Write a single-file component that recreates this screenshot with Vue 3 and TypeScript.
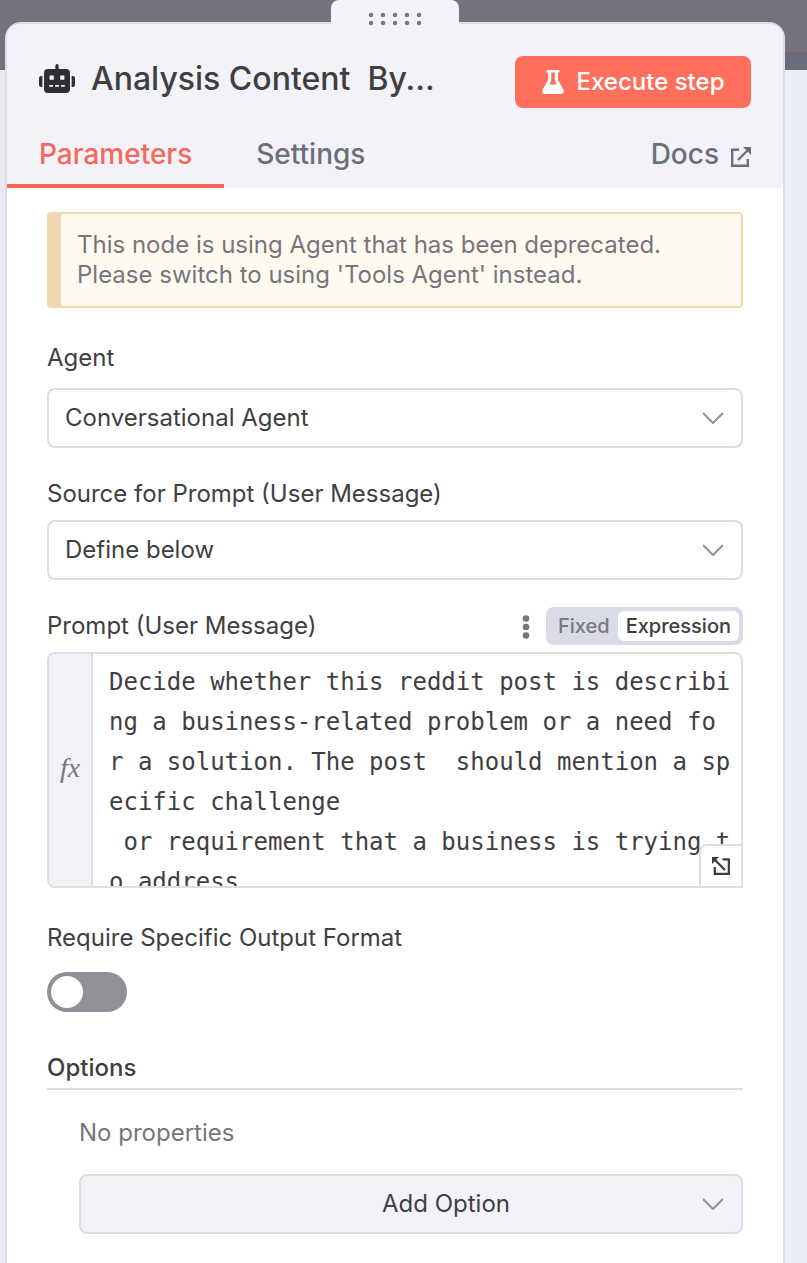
<script setup lang="ts">
import { ref } from 'vue'

type Tab = 'Parameters' | 'Settings'
const tabs: Tab[] = ['Parameters', 'Settings']
const activeTab = ref<Tab>('Parameters')

const agent = ref('Conversational Agent')
const source = ref('Define below')
const mode = ref<'Fixed' | 'Expression'>('Expression')
const modes = ['Fixed', 'Expression'] as const
const requireFormat = ref(false)
const option = ref('')
const prompt = ref(
  [
    'Decide whether this reddit post is describi',
    'ng a business-related problem or a need fo',
    'r a solution. The post  should mention a sp',
    'ecific challenge',
    ' or requirement that a business is trying t',
    'o address',
  ].join('\n'),
)
</script>

<template>
  <div class="stage">
    <main class="panel">
      <div class="handle" aria-hidden="true">
        <svg width="56" height="14" viewBox="0 0 56 14" fill="#77757f">
          <template v-for="c in 5" :key="c">
            <circle :cx="c * 12 - 8" cy="3" r="2.2" />
            <circle :cx="c * 12 - 8" cy="11" r="2.2" />
          </template>
        </svg>
      </div>

      <header class="header">
        <div class="title-row">
          <svg class="robot" width="36" height="30" viewBox="0 0 36 30" aria-hidden="true">
            <path
              fill="#2f2f31"
              fill-rule="evenodd"
              d="M18 0a1.6 1.6 0 0 1 1.6 1.6V5H27a4 4 0 0 1 4 4v16a4 4 0 0 1-4 4H9a4 4 0 0 1-4-4V9a4 4 0 0 1 4-4h7.4V1.6A1.6 1.6 0 0 1 18 0ZM10.6 11.6v4.2h4.2v-4.2Zm10.600 0v4.200h4.200v-4.200ZM10.200 21v1.700h3.800v-1.700Zm5.900 0v1.700h3.800v-1.700Zm5.900 0v1.700h3.800v-1.700ZM3.400 12v11H2a2 2 0 0 1-2-2v-7a2 2 0 0 1 2-2ZM32.600 12H34a2 2 0 0 1 2 2v7a2 2 0 0 1-2 2h-1.400Z"
            />
          </svg>
          <h1 class="title">Analysis Content&nbsp; By...</h1>
          <button class="execute" type="button">
            <svg width="22" height="24" viewBox="0 0 22 24" aria-hidden="true">
              <path
                fill="#fff"
                fill-rule="evenodd"
                d="M4.500 0h13v2.600H16v7.400l5.300 9.600C22.600 22 21.500 24 19 24H3C.5 24-.6 22 .7 19.600L6 10V2.600H4.500ZM9.200 2.600v8L7.300 14.600h7.400L12.800 10.600v-8Z"
              />
            </svg>
            <span>Execute step</span>
          </button>
        </div>
        <nav class="tabs">
          <button
            v-for="tab in tabs"
            :key="tab"
            type="button"
            class="tab"
            :class="{ active: tab === activeTab }"
            @click="activeTab = tab"
          >
            {{ tab }}
          </button>
          <a class="docs" href="#docs">
            <span>Docs</span>
            <svg width="20" height="20" viewBox="0 0 20 20" fill="none" stroke="#6b6f78" stroke-width="2.400" aria-hidden="true">
              <path d="M8 2.700H1.200V18.800H16.800V12M7 13 18 2" />
              <path d="M12 0h8v8Z" fill="#6b6f78" stroke="none" />
            </svg>
          </a>
        </nav>
      </header>

      <section class="body">
        <p class="notice">
          This node is using Agent that has been deprecated. Please switch to using 'Tools Agent' instead.
        </p>

        <div class="field agent">
          <label for="agent">Agent</label>
          <div class="select">
            <select id="agent" v-model="agent">
              <option>Conversational Agent</option>
            </select>
            <svg class="chevron" width="20" height="12" viewBox="0 0 20 12" aria-hidden="true"><path d="m0 1 10 10L20 1" /></svg>
          </div>
        </div>

        <div class="field">
          <label for="source">Source for Prompt (User Message)</label>
          <div class="select">
            <select id="source" v-model="source">
              <option>Define below</option>
            </select>
            <svg class="chevron" width="20" height="12" viewBox="0 0 20 12" aria-hidden="true"><path d="m0 1 10 10L20 1" /></svg>
          </div>
        </div>

        <div class="field prompt">
          <div class="label-row">
            <label for="prompt">Prompt (User Message)</label>
            <button class="more" type="button" aria-label="More actions">
              <svg width="8" height="26" viewBox="0 0 8 26" fill="#77757b">
                <circle cx="4" cy="5.500" r="3.300" />
                <circle cx="4" cy="14" r="3.300" />
                <circle cx="4" cy="22.500" r="3.300" />
              </svg>
            </button>
            <div class="modes">
              <button
                v-for="m in modes"
                :key="m"
                type="button"
                :class="{ on: m === mode }"
                @click="mode = m"
              >
                {{ m }}
              </button>
            </div>
          </div>
          <div class="editor">
            <span class="fx" aria-hidden="true">fx</span>
            <textarea id="prompt" v-model="prompt" spellcheck="false"></textarea>
            <button class="expand" type="button" aria-label="Open editor">
              <svg width="18" height="18" viewBox="0 0 18 18" fill="none" stroke="#3b3a3d" stroke-width="2.200" aria-hidden="true">
                <path d="M10.500 2.300H16.800V16.800H2.800V10M2 2l11 11" />
                <path d="M0 0h7L0 7Z" fill="#3b3a3d" stroke="none" />
              </svg>
            </button>
          </div>
        </div>

        <div class="field format">
          <label for="format">Require Specific Output Format</label>
          <input id="format" v-model="requireFormat" class="switch" type="checkbox" role="switch" />
        </div>

        <h2 class="options-title">Options</h2>
        <div class="options">
          <p>No properties</p>
          <div class="select add">
            <select v-model="option" aria-label="Add Option">
              <option value="">Add Option</option>
            </select>
            <svg class="chevron" width="20" height="12" viewBox="0 0 20 12" aria-hidden="true"><path d="m0 1 10 10L20 1" /></svg>
          </div>
        </div>
      </section>
    </main>
  </div>
</template>

<style>
body {
  margin: 0;
}
</style>

<style scoped>
* {
  box-sizing: border-box;
}

.stage {
  display: flex;
  min-height: 100vh;
  padding: 22px 22px 0 5px;
  font-family: Inter, 'Liberation Sans', sans-serif;
  font-size: 24px;
  line-height: 30px;
  color: #3f3e42;
  background:
    linear-gradient(#6b6c7b, #6b6c7b) right 52px / 22px 18px no-repeat,
    linear-gradient(#75727d, #75727d) 0 0 / 100% 70px no-repeat,
    linear-gradient(90deg, #e6eaee 50%, #e9edf6 50%);
}

button,
select,
textarea {
  margin: 0;
  font: inherit;
  color: inherit;
  border: 0;
  background: none;
}

button {
  padding: 0;
  cursor: pointer;
}

h1,
h2,
p {
  margin: 0;
}

svg {
  display: block;
  flex: none;
}

.panel {
  position: relative;
  flex: 1;
  min-width: 0;
  border: 2px solid #dbdee5;
  border-bottom: 0;
  border-radius: 16px 16px 0 0;
  background: #fff;
}

.handle {
  position: absolute;
  top: -24px;
  left: 50%;
  display: flex;
  justify-content: center;
  width: 128px;
  height: 30px;
  margin-left: -64px;
  padding-top: 12px;
  border-radius: 8px 8px 0 0;
  background: #f2f2f8;
}

.header {
  border-radius: 14px 14px 0 0;
  background: #f2f2f8;
}

.title-row {
  display: flex;
  align-items: flex-start;
  padding: 32px 32px 0;
}

.robot {
  margin-top: 8px;
}

.title {
  flex: 1;
  min-width: 0;
  margin-left: 16px;
  overflow: hidden;
  font-size: 32px;
  font-weight: 500;
  line-height: 46px;
  white-space: nowrap;
}

.execute {
  display: flex;
  align-items: center;
  justify-content: center;
  gap: 13px;
  width: 236px;
  height: 52px;
  border-radius: 8px;
  font-weight: 500;
  color: #fff;
  background: #ff6f5c;
}

.tabs {
  display: flex;
  height: 80px;
  font-size: 28px;
  font-weight: 500;
  color: #6b6f78;
}

.tab {
  padding: 16px 32px 0;
  border-bottom: 4px solid transparent;
}

.tab.active {
  color: #f4695c;
  border-color: #f4695c;
}

.docs {
  display: flex;
  align-items: center;
  gap: 12px;
  margin-left: auto;
  padding: 16px 32px 4px 0;
  color: inherit;
  text-decoration: none;
}

.docs svg {
  margin-top: 6px;
}

.body {
  padding: 24px 40px 30px;
}

.notice {
  padding: 16px;
  min-height: 96px;
  border: 2px solid #efd8ae;
  border-left-width: 14px;
  border-radius: 4px;
  color: #77757b;
  background: #fefaf0;
}

.field {
  margin-top: 31px;
}

.field > label {
  display: block;
  margin-bottom: 11px;
}

.field.agent {
  margin-top: 35px;
}

.agent > label {
  margin-bottom: 15px;
}

.field.prompt {
  margin-top: 27px;
}

.field.format {
  margin-top: 35px;
}

.select {
  display: grid;
  align-items: center;
}

.select > * {
  grid-area: 1 / 1;
}

.select select {
  width: 100%;
  height: 60px;
  padding: 0 48px 0 16px;
  appearance: none;
  border: 2px solid #dbdee3;
  border-radius: 8px;
  background: #fff;
}

.chevron {
  justify-self: end;
  margin-right: 20px;
  fill: none;
  stroke: #919097;
  stroke-width: 2;
  pointer-events: none;
}

.label-row {
  display: flex;
  align-items: center;
  height: 38px;
  margin-bottom: 7px;
}

.label-row label {
  flex: 1;
}

.more {
  padding: 0 16px;
}

.modes {
  display: flex;
  height: 38px;
  padding: 4px;
  border-radius: 8px;
  font-size: 20px;
  font-weight: 500;
  color: #77777f;
  background: #d9dce6;
}

.modes button {
  padding: 0 8px;
  border-radius: 6px;
}

.modes .on {
  color: #3f3e42;
  background: #fff;
}

.editor {
  position: relative;
  display: flex;
  height: 236px;
  overflow: hidden;
  border: 2px solid #dbdee3;
  border-radius: 8px 8px 0 8px;
}

.fx {
  display: flex;
  align-items: center;
  justify-content: center;
  width: 44px;
  padding-bottom: 4px;
  border-right: 2px solid #dbdee3;
  font-family: 'Liberation Serif', serif;
  font-size: 28px;
  font-style: italic;
  color: #77777f;
  background: #f2f2f8;
}

textarea {
  flex: 1;
  min-width: 0;
  padding: 8px 0 0 16px;
  overflow: hidden;
  resize: none;
  outline: 0;
  font-family: 'DejaVu Sans Mono', monospace;
  line-height: 40px;
  white-space: pre;
}

.expand {
  position: absolute;
  right: 0;
  bottom: 0;
  display: grid;
  place-items: center;
  width: 42px;
  height: 42px;
  border: 2px solid #dbdee3;
  border-width: 2px 0 0 2px;
  border-radius: 8px 0 0 0;
  background: #fff;
}

.field > .switch {
  display: block;
  width: 80px;
  height: 40px;
  margin: 19px 0 0;
  padding: 4px;
  appearance: none;
  border-radius: 20px;
  background: #919097;
}

.switch::before {
  display: block;
  width: 32px;
  height: 32px;
  border-radius: 50%;
  background: #fff;
  content: '';
}

.switch:checked::before {
  margin-left: auto;
}

.options-title {
  margin-top: 41px;
  padding-bottom: 5px;
  border-bottom: 2px solid #dbdee3;
  font-size: 24px;
  font-weight: 500;
}

.options {
  padding: 28px 0 0 32px;
}

.options p {
  margin-bottom: 26px;
  color: #77757b;
}

.add select {
  padding: 0 0 0 70px;
  text-align: center;
  background: #f2f2f8;
}
</style>
